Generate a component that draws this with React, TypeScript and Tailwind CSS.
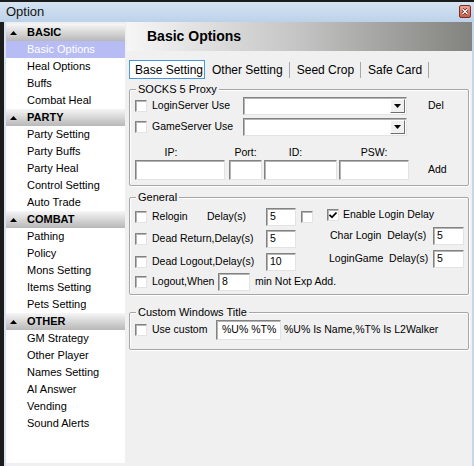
import React from "react";

const MENU = [
  { title: "BASIC", items: ["Basic Options", "Heal Options", "Buffs", "Combat Heal"] },
  { title: "PARTY", items: ["Party Setting", "Party Buffs", "Party Heal", "Control Setting", "Auto Trade"] },
  { title: "COMBAT", items: ["Pathing", "Policy", "Mons Setting", "Items Setting", "Pets Setting"] },
  { title: "OTHER", items: ["GM Strategy", "Other Player", "Names Setting", "AI Answer", "Vending", "Sound Alerts"] },
];

const sunken =
  "bg-white border border-t-[#828282] border-l-[#828282] border-r-[#e3e3e3] border-b-[#e3e3e3] shadow-[inset_1px_1px_0_#b4b4b4]";

function Check({ checked = false }: { checked?: boolean }) {
  return (
    <span className={`relative inline-block w-[12px] h-[12px] shrink-0 ${sunken}`}>
      {checked && (
        <svg className="absolute left-0 top-0" width="10" height="10" viewBox="0 0 10 10">
          <path d="M1.5 4.8 L4 7.3 L8.5 2.5" fill="none" stroke="#000" strokeWidth="1.8" />
        </svg>
      )}
    </span>
  );
}

function Field({ value = "", className = "" }: { value?: string; className?: string }) {
  return (
    <div className={`flex items-center overflow-hidden whitespace-nowrap pl-[3px] shrink-0 ${sunken} ${className}`}>
      {value}
    </div>
  );
}

function Combo() {
  return (
    <div className={`flex justify-end items-stretch w-[164px] h-[18px] p-[1px] ${sunken}`}>
      <div className="w-[15px] flex items-center justify-center bg-[#f0f0f0] border border-t-[#ffffff] border-l-[#ffffff] border-r-[#6e6e6e] border-b-[#6e6e6e]">
        <svg width="7" height="4" viewBox="0 0 7 4">
          <path d="M0 0 H7 L3.5 4 Z" fill="#000" />
        </svg>
      </div>
    </div>
  );
}

function Group({ title, className = "", children }: { title: string; className?: string; children: React.ReactNode }) {
  return (
    <div
      className={`relative ml-[4px] w-[340px] text-[10.5px] border border-[#a6a6a6] rounded-[2px] shadow-[1px_1px_0_#ffffff,inset_1px_1px_0_#ffffff] ${className}`}
    >
      <span className="absolute -top-[7px] left-[6px] px-[2px] bg-[#f0f0f0] leading-[13px] text-[11px]">{title}</span>
      {children}
    </div>
  );
}

function Sidebar() {
  return (
    <div className="w-[119px] mt-[2px] h-[439px] bg-white">
      {MENU.map((g) => (
        <div key={g.title}>
          <div className="h-[17px] flex items-center pl-[4px] font-bold bg-linear-to-b from-[#f6f6f6] to-[#b8b8b8]">
            <svg width="7" height="4" viewBox="0 0 7 4">
              <path d="M0 4 H7 L3.5 0 Z" fill="#000" />
            </svg>
            <span className="ml-[10px]">{g.title}</span>
          </div>
          {g.items.map((it) => (
            <div
              key={it}
              className={`h-[17px] flex items-center pl-[21px] ${
                it === "Basic Options" ? "bg-[#b7bcf5] text-white" : ""
              }`}
            >
              {it}
            </div>
          ))}
        </div>
      ))}
    </div>
  );
}

export default function App() {
  const tabs = ["Other Setting", "Seed Crop", "Safe Card"];

  return (
    <div className="w-[474px] h-[466px] pt-[2px] bg-[#1c1c1c] flex flex-col overflow-hidden text-[11px] text-black font-['Liberation_Sans',Arial,sans-serif]">
      {/* title bar */}
      <div className="h-[20px] shrink-0 flex items-center bg-linear-to-b from-[#d6e4f3] to-[#bcd1e9]">
        <span className="pl-[6px] text-[13px] text-[#141414]">Option</span>
        <svg className="ml-auto mr-[3px] mb-[2px]" width="12" height="13" viewBox="0 0 12 13">
          <defs>
            <linearGradient id="cb" x1="0" y1="0" x2="0" y2="1">
              <stop offset="0" stopColor="#efa898" />
              <stop offset="1" stopColor="#c45a48" />
            </linearGradient>
          </defs>
          <rect x="0.5" y="0.5" width="11" height="12" rx="1.5" fill="url(#cb)" stroke="#7c2c24" />
          <path d="M3.5 4 L8.5 9 M8.5 4 L3.5 9" stroke="#5a1a14" strokeWidth="2.6" />
          <path d="M3.5 4 L8.5 9 M8.5 4 L3.5 9" stroke="#ffffff" strokeWidth="1.4" />
        </svg>
      </div>

      {/* body */}
      <div className="flex flex-1 bg-[#f0f0f0]">
        <div className="w-[4px] bg-[#1c1c1c]" />
        <div className="w-[2px] bg-[#d6e2f0]" />
        <Sidebar />

        <div className="flex-1 flex flex-col">
          <div className="ml-[2px] h-[29px] flex items-center pl-[20px] text-[14px] font-bold bg-linear-to-r from-[#f6f6f6] via-[#c4c4c4] to-[#82827e]">
            Basic Options
          </div>

          {/* tabs */}
          <div className="mt-[9px] ml-[4px] h-[19px] flex items-center text-[12px]">
            <div className="h-[19px] w-[76px] flex items-center pl-[5px] bg-white border border-[#4a98dc]">
              Base Setting
            </div>
            {tabs.map((t) => (
              <React.Fragment key={t}>
                <span className="ml-[7px] whitespace-nowrap">{t}</span>
                <span className="ml-[6px] w-px h-[16px] bg-[#a8a8a8]" />
              </React.Fragment>
            ))}
          </div>

          {/* SOCKS */}
          <Group title="SOCKS 5 Proxy" className="mt-[10px] h-[97px]">
            <div className="mt-[7px] h-[18px] flex items-center">
              <div className="w-[113px] pl-[5px] flex items-center">
                <Check />
                <span className="ml-[5px] whitespace-nowrap">LoginServer Use</span>
              </div>
              <Combo />
              <span className="ml-[21px]">Del</span>
            </div>
            <div className="mt-[3px] h-[18px] flex items-center">
              <div className="w-[113px] pl-[5px] flex items-center">
                <Check />
                <span className="ml-[5px] whitespace-nowrap">GameServer Use</span>
              </div>
              <Combo />
            </div>
            <div className="mt-[10px] pl-[5px] flex items-end">
              <div className="flex flex-col w-[90px]">
                <span className="h-[13px] leading-[13px] mb-[1px] text-center pr-[18px]">IP:</span>
                <Field className="h-[20px] w-[90px]" />
              </div>
              <div className="flex flex-col w-[33px] ml-[4px]">
                <span className="h-[13px] leading-[13px] mb-[1px] text-center">Port:</span>
                <Field className="h-[20px] w-[33px]" />
              </div>
              <div className="flex flex-col w-[73px] ml-[2px]">
                <span className="h-[13px] leading-[13px] mb-[1px] text-center pr-[10px]">ID:</span>
                <Field className="h-[20px] w-[73px]" />
              </div>
              <div className="flex flex-col w-[70px] ml-[2px]">
                <span className="h-[13px] leading-[13px] mb-[1px] text-center">PSW:</span>
                <Field className="h-[20px] w-[70px]" />
              </div>
              <span className="ml-[19px] h-[20px] flex items-center">Add</span>
            </div>
          </Group>

          {/* General */}
          <Group title="General" className="mt-[11px] h-[98px]">
            <div className="flex">
              <div className="flex flex-col">
                <div className="mt-[10px] h-[18px] flex items-center">
                  <div className="w-[136px] pl-[5px] flex items-center">
                    <Check />
                    <span className="ml-[5px] w-[55px]">Relogin</span>
                    <span>Delay(s)</span>
                  </div>
                  <Field value="5" className="h-[18px] w-[30px]" />
                  <span className="ml-[5px] flex">
                    <Check />
                  </span>
                </div>
                <div className="mt-[4px] h-[18px] flex items-center">
                  <div className="w-[136px] pl-[5px] flex items-center">
                    <Check />
                    <span className="ml-[5px] whitespace-nowrap">Dead Return,Delay(s)</span>
                  </div>
                  <Field value="5" className="h-[18px] w-[30px]" />
                </div>
                <div className="mt-[5px] h-[18px] flex items-center">
                  <div className="w-[136px] pl-[5px] flex items-center">
                    <Check />
                    <span className="ml-[5px] whitespace-nowrap">Dead Logout,Delay(s)</span>
                  </div>
                  <Field value="10" className="h-[18px] w-[30px]" />
                </div>
              </div>

              <div className="ml-[14px] flex flex-col">
                <div className="mt-[8px] h-[18px] flex items-center">
                  <Check checked />
                  <span className="ml-[4px] whitespace-nowrap">Enable Login Delay</span>
                </div>
                <div className="mt-[3px] h-[18px] flex items-center">
                  <span className="w-[106px] pl-[3px] whitespace-pre">Char Login  Delay(s)</span>
                  <Field value="5" className="h-[18px] w-[31px]" />
                </div>
                <div className="mt-[5px] h-[18px] flex items-center">
                  <span className="w-[106px] pl-[2px] whitespace-pre">LoginGame  Delay(s)</span>
                  <Field value="5" className="h-[18px] w-[31px]" />
                </div>
              </div>
            </div>
            <div className="mt-[2px] h-[18px] pl-[5px] flex items-center">
              <Check />
              <span className="ml-[5px] w-[66px] whitespace-nowrap">Logout,When</span>
              <Field value="8" className="h-[18px] w-[32px]" />
              <span className="ml-[5px] whitespace-nowrap">min Not Exp Add.</span>
            </div>
          </Group>

          {/* Custom title */}
          <Group title="Custom Windows Title" className="mt-[17px] h-[38px]">
            <div className="mt-[7px] h-[20px] flex items-center">
              <div className="w-[86px] pl-[5px] flex items-center">
                <Check />
                <span className="ml-[5px] whitespace-nowrap">Use custom</span>
              </div>
              <Field value="%U% %T%" className="h-[20px] w-[65px] pl-[5px]" />
              <span className="ml-[3px] whitespace-nowrap">%U% Is Name,%T% Is L2Walker</span>
            </div>
          </Group>
        </div>

        <div className="w-[2px] bg-[#c6d7eb]" />
      </div>
    </div>
  );
}
